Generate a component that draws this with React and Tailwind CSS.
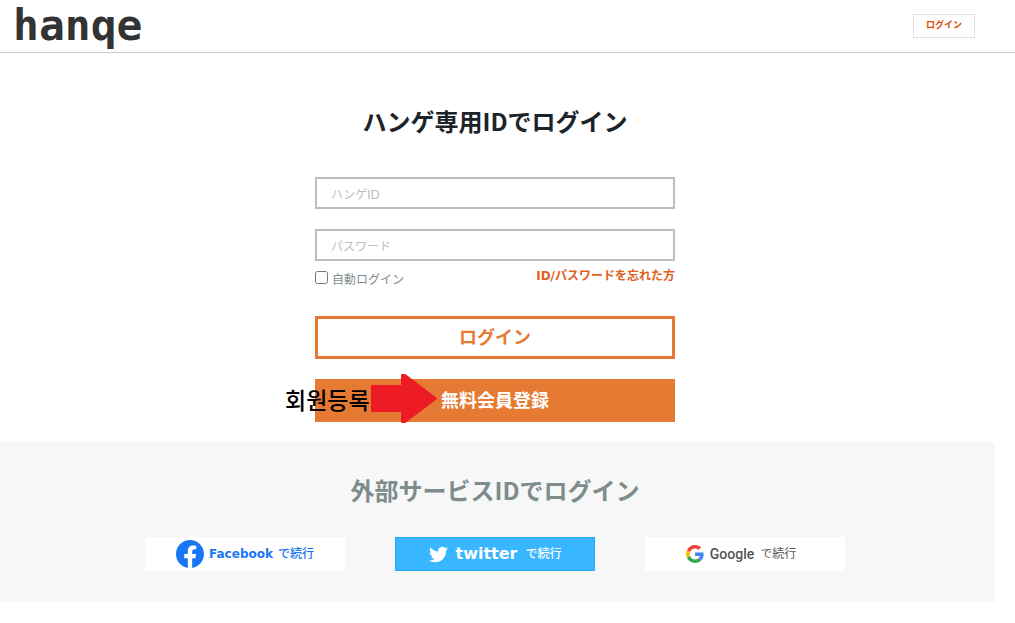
import React from 'react';

function TwitterIcon() {
  return (
    <svg viewBox="0 0 24 24" className="w-[19px] h-[19px]" fill="#fff" aria-hidden="true">
      <path d="M23.953 4.57a10 10 0 01-2.825.775 4.958 4.958 0 002.163-2.723c-.951.555-2.005.959-3.127 1.184a4.92 4.92 0 00-8.384 4.482C7.69 8.095 4.067 6.13 1.64 3.162a4.822 4.822 0 00-.666 2.475c0 1.71.87 3.213 2.188 4.096a4.904 4.904 0 01-2.228-.616v.06a4.923 4.923 0 003.946 4.827 4.996 4.996 0 01-2.212.085 4.936 4.936 0 004.604 3.417 9.867 9.867 0 01-6.102 2.105c-.39 0-.779-.023-1.17-.067a13.995 13.995 0 007.557 2.209c9.053 0 13.998-7.496 13.998-13.985 0-.21 0-.42-.015-.63A9.935 9.935 0 0024 4.59z" />
    </svg>
  );
}

function FacebookIcon() {
  return (
    <svg viewBox="0 0 24 24" className="w-7 h-7" fill="#1877f2" aria-hidden="true">
      <path d="M24 12.073c0-6.627-5.373-12-12-12s-12 5.373-12 12c0 5.99 4.388 10.954 10.125 11.854v-8.385H7.078v-3.47h3.047V9.43c0-3.007 1.792-4.669 4.533-4.669 1.312 0 2.686.235 2.686.235v2.953H15.83c-1.491 0-1.956.925-1.956 1.874v2.25h3.328l-.532 3.47h-2.796v8.385C19.612 23.027 24 18.062 24 12.073z" />
    </svg>
  );
}

function GoogleIcon() {
  return (
    <svg viewBox="0 0 48 48" className="w-[18px] h-[18px]" aria-hidden="true">
      <path fill="#EA4335" d="M24 9.5c3.54 0 6.71 1.22 9.21 3.6l6.85-6.85C35.9 2.38 30.47 0 24 0 14.62 0 6.51 5.38 2.56 13.22l7.98 6.19C12.43 13.72 17.74 9.5 24 9.5z" />
      <path fill="#4285F4" d="M46.98 24.55c0-1.57-.15-3.09-.38-4.55H24v9.02h12.94c-.58 2.96-2.26 5.48-4.78 7.18l7.73 6c4.51-4.18 7.09-10.36 7.09-17.65z" />
      <path fill="#FBBC05" d="M10.53 28.59c-.48-1.45-.76-2.99-.76-4.59s.27-3.14.76-4.59l-7.98-6.19C.92 16.46 0 20.12 0 24c0 3.88.92 7.54 2.56 10.78l7.97-6.19z" />
      <path fill="#34A853" d="M24 48c6.48 0 11.93-2.13 15.89-5.81l-7.73-6c-2.15 1.45-4.92 2.3-8.16 2.3-6.26 0-11.57-4.22-13.47-9.91l-7.98 6.19C6.51 42.62 14.62 48 24 48z" />
    </svg>
  );
}

function Header() {
  return (
    <header className="flex h-[53px] items-center justify-between border-b border-[#cccccc] pl-[13px] pr-10">
      <a href="#" className="pb-[2px] font-['DejaVu_Sans_Mono',monospace] text-[43px] leading-[50px] font-bold text-[#333333]">
        hanqe
      </a>
      <button type="button" className="h-6 w-[62px] border border-[#e1e1e1] bg-white text-[9px] font-bold text-[#e04a00]">
        ログイン
      </button>
    </header>
  );
}

function LoginForm() {
  return (
    <form className="mx-auto w-[360px]" onSubmit={(e) => e.preventDefault()}>
      <input
        type="text"
        aria-label="ハンゲID"
        placeholder="ハンゲID"
        className="block h-8 w-full border-2 border-[#bbbfc4] px-[14px] pt-1 text-xs placeholder:text-[#bbbfc4]"
      />
      <input
        type="password"
        aria-label="パスワード"
        placeholder="パスワード"
        className="mt-5 block h-8 w-full border-2 border-[#bbbfc4] px-[14px] pt-1 text-xs placeholder:text-[#bbbfc4]"
      />

      <div className="flex h-[55px] items-start justify-between pt-[6px] text-xs leading-[18px]">
        <label className="flex items-start gap-1 pt-1 text-[#7f8c8d]">
          <input type="checkbox" className="h-[13px] w-[13px]" />
          自動ログイン
        </label>
        <a href="#" className="font-bold text-[#e0601c]">ID/パスワードを忘れた方</a>
      </div>

      <button type="submit" className="block h-[43px] w-full border-[3px] border-[#e67a32] bg-white text-lg leading-6 font-bold text-[#e67a32]">
        ログイン
      </button>

      {/* Sign-up button with the callout on top */}
      <div className="relative mt-5">
        <button type="button" className="block h-[43px] w-full bg-[#e67a32] text-lg font-bold text-white">
          無料会員登録
        </button>
        <div className="pointer-events-none absolute -left-[30px] -top-[5px] flex h-[49px] items-center gap-px">
          <span className="font-['Noto_Sans_CJK_KR',sans-serif] text-[23px] leading-7 font-medium whitespace-nowrap text-black">
            회원등록
          </span>
          <svg viewBox="0 0 66 49" className="h-[49px] w-[66px]" fill="#ed1c24" stroke="#ed1c24" strokeWidth="2" strokeLinejoin="round" aria-hidden="true">
            <path d="M1 12H31V1H34L65 24.500L34 48H31V37H1Z" />
          </svg>
        </div>
      </div>
    </form>
  );
}

function SocialLogin() {
  return (
    <section className="mt-5 h-40 bg-[#f7f7f7] pt-[30px] pr-[5px]">
      <h2 className="text-center font-['Noto_Sans_CJK_JP',sans-serif] text-2xl leading-9 font-bold text-[#7f8c8d]">
        外部サービスIDでログイン
      </h2>
      <div className="mt-[29px] flex justify-center gap-[50px] text-xs">
        <button type="button" className="flex h-[34px] w-[200px] items-center justify-center gap-[5px] bg-white font-medium text-[#1877f2]">
          <FacebookIcon />
          <span className="font-['DejaVu_Sans',sans-serif] font-bold">Facebook</span>
          <span>で続行</span>
        </button>
        <button type="button" className="flex h-[34px] w-[200px] items-center justify-center gap-2 border border-[#1baef5] bg-[#38b6ff] font-medium text-white">
          <TwitterIcon />
          <span className="font-['DejaVu_Sans',sans-serif] text-base font-bold">twitter</span>
          <span>で続行</span>
        </button>
        <button type="button" className="flex h-[34px] w-[200px] items-center justify-center gap-[6px] bg-white pr-2 text-[#555555]">
          <GoogleIcon />
          <span className="font-['Roboto',sans-serif] text-sm font-medium">Google</span>
          <span>で続行</span>
        </button>
      </div>
    </section>
  );
}

export default function App() {
  return (
    <div className="bg-white font-['DejaVu_Sans','Noto_Sans_CJK_JP',sans-serif]">
      <Header />
      <main className="mr-5 pt-[50px] pb-5">
        <div className="pr-[5px]">
          <h1 className="mb-[38px] text-center font-['Noto_Sans_CJK_JP',sans-serif] text-2xl leading-9 font-bold text-[#1c2329]">
            ハンゲ専用IDでログイン
          </h1>
          <LoginForm />
        </div>
        <SocialLogin />
      </main>
    </div>
  );
}
